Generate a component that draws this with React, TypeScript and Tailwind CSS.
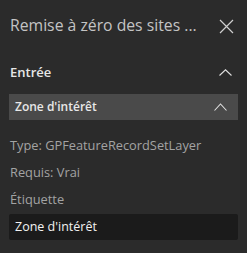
export default function App() {
  return (
    <div className="w-[247px] h-[253px] bg-[#2b2b2b] overflow-hidden" style={{ fontFamily: "'Open Sans', 'Noto Sans', sans-serif" }}>
      <div className="flex items-center justify-between pl-[10px] pr-[13px] h-[52px]">
        <div className="text-[15.75px] text-[#c4c4c4] leading-none whitespace-nowrap">Remise à zéro des sites ...</div>
        <svg width="15" height="15" viewBox="0 0 15 15" className="shrink-0">
          <path d="M1 1 L14 14 M14 1 L1 14" stroke="#cfcfcf" strokeWidth="1.2" fill="none" />
        </svg>
      </div>
      <div className="flex items-center justify-between pl-[10px] pr-[15px] h-[40px]">
        <div className="text-[13px] font-semibold text-[#e6e6e6] leading-none">Entrée</div>
        <svg width="13" height="7" viewBox="0 0 13 7">
          <path d="M0.5 6.5 L6.5 0.8 L12.5 6.5" stroke="#e0e0e0" strokeWidth="1.1" fill="none" />
        </svg>
      </div>
      <div className="mx-[9px] mt-[2px] h-[26px] bg-[#4a4a4a] flex items-center justify-between pl-[6px] pr-[11px]">
        <div className="text-[12px] font-semibold text-[#e8e8e8] leading-none">Zone d'intérêt</div>
        <svg width="13" height="8" viewBox="0 0 13 8">
          <path d="M0.5 7.5 L6.5 1 L12.5 7.5" stroke="#e0e0e0" strokeWidth="1.1" fill="none" />
        </svg>
      </div>
      <div className="px-[10px] pt-[19px] text-[12.8px] text-[#a3a3a3] leading-none">
        <div>Type: GPFeatureRecordSetLayer</div>
        <div className="mt-[14px]">Requis: Vrai</div>
        <div className="mt-[14px]">Étiquette</div>
      </div>
      <div className="mx-[9px] mt-[9px] h-[26px] bg-[#1b1b1b] rounded-[2px] flex items-center pl-[6px]">
        <div className="text-[12.5px] text-[#f2f2f2] leading-none">Zone d'intérêt</div>
      </div>
    </div>
  );
}
